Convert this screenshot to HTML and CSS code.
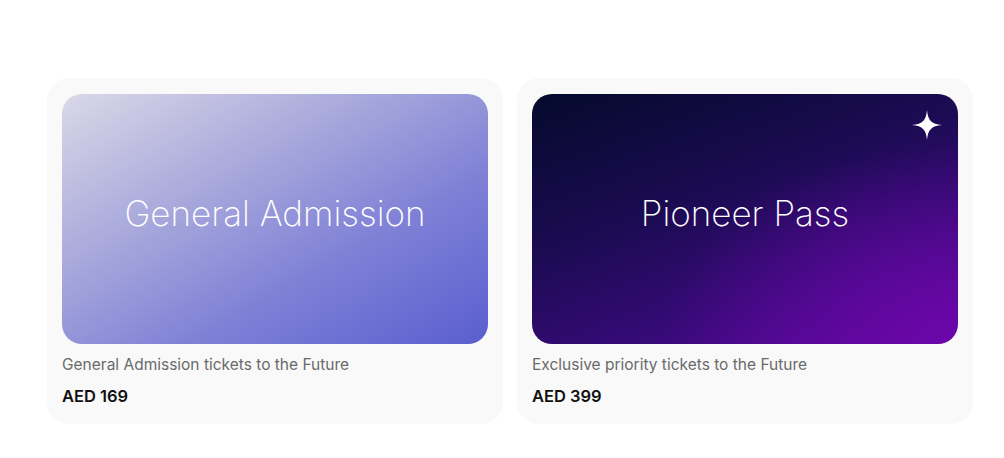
FILE: index.html
```html
<!DOCTYPE html>
<html>
<head>
<meta charset="utf-8">
<link rel="stylesheet" href="styles.css">
</head>
<body>
<main class="tickets">
  <article class="ticket">
    <div class="cover cover-general">
      <h2 class="cover-title">General Admission</h2>
    </div>
    <p class="desc">General Admission tickets to the Future</p>
    <p class="price">AED 169</p>
  </article>
  <article class="ticket">
    <div class="cover cover-pioneer">
      <svg class="sparkle" viewBox="0 0 32 32" width="32" height="32" aria-hidden="true">
        <path d="M16 1 C17 11 20 15 31 16 C20 17 17 21 16 31 C15 21 12 17 1 16 C12 15 15 11 16 1 Z" fill="#ffffff"/>
      </svg>
      <h2 class="cover-title">Pioneer Pass</h2>
    </div>
    <p class="desc">Exclusive priority tickets to the Future</p>
    <p class="price">AED 399</p>
  </article>
</main>
</body>
</html>
```

FILE: styles.css
```css
* { box-sizing: border-box; }
html, body { margin: 0; padding: 0; background: #ffffff; }
body {
  font-family: "Inter", "Liberation Sans", sans-serif;
  width: 1004px;
  height: 458px;
  overflow: hidden;
}
.tickets {
  display: grid;
  grid-template-columns: 456px 456px;
  column-gap: 14px;
  padding: 78px 0 0 47px;
}
.ticket {
  background: #f9f9f9;
  border-radius: 22px;
  padding: 16px 15px 18px 15px;
  height: 346px;
}
.cover {
  position: relative;
  height: 250px;
  border-radius: 20px;
  display: flex;
  align-items: center;
  justify-content: center;
  overflow: hidden;
}
.cover-general {
  background: linear-gradient(150deg, #dad8e7 0%, #a9a9dc 35%, #7f81d6 65%, #5a5ecf 100%);
}
.cover-pioneer {
  background:
    radial-gradient(ellipse 70% 80% at 100% 100%, rgba(110, 6, 170, 0.95) 0%, rgba(110, 6, 170, 0) 100%),
    linear-gradient(160deg, #050a2c 0%, #1b0b52 40%, #3a0a7c 75%, #56089a 100%);
}
.cover-title {
  margin: 0;
  font-family: "Inter", sans-serif;
  font-weight: 250;
  font-size: 35px;
  letter-spacing: 0;
  color: #ffffff;
  position: relative;
  top: -6px;
}
.sparkle {
  position: absolute;
  top: 15px;
  right: 15px;
}
.desc {
  margin: 12px 0 0 0;
  font-size: 15.5px;
  color: #6a6a6a;
  line-height: 18px;
}
.price {
  margin: 12px 0 0 0;
  font-size: 16.5px;
  font-weight: 600;
  color: #111111;
  line-height: 20px;
}
```
